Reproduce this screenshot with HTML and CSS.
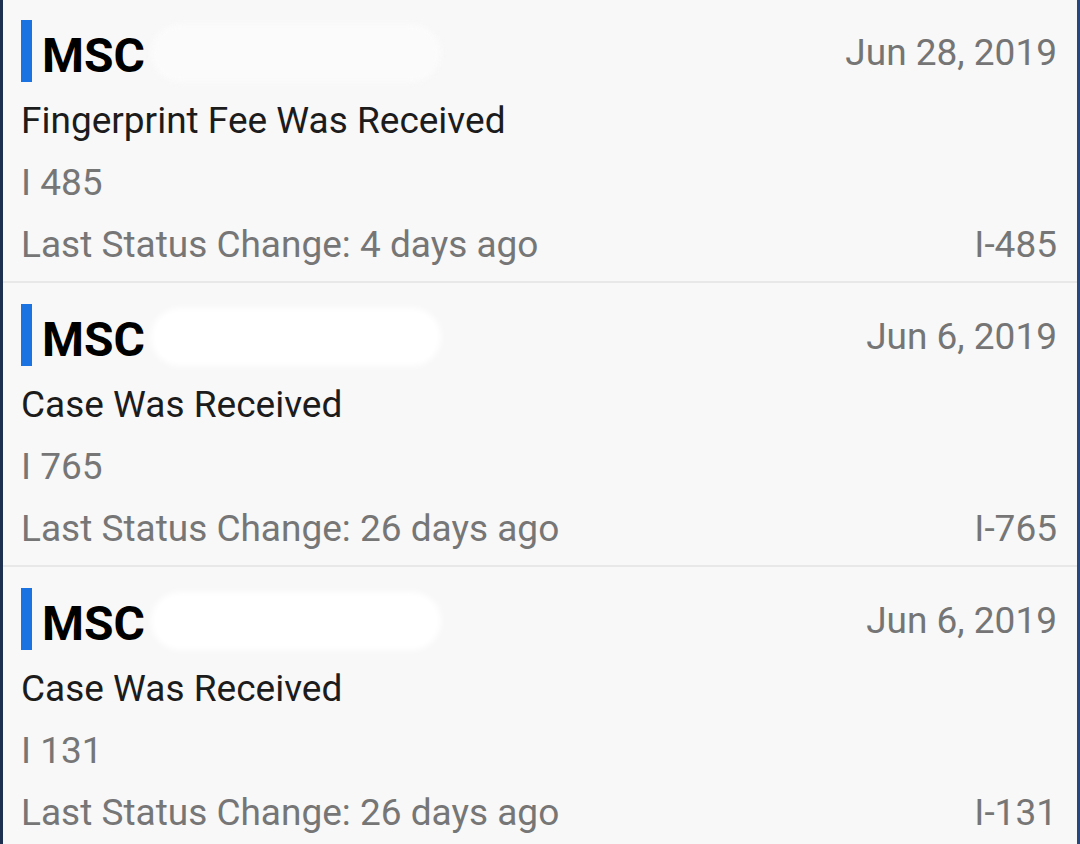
FILE: index.html
```html
<!DOCTYPE html>
<html lang="en">

<head>
    <meta charset="utf-8">
    <meta name="viewport" content="width=device-width, initial-scale=1">
    <title>Case Status</title>

    <!-- CSS for the list layout -->
    <link rel="stylesheet" href="styles.css">
</head>

<body>
    <div class="screen">

        <!-- Case 1 -->
        <div class="case first">
            <div class="case-head">
                <span class="mark"></span>
                <span class="name">MSC</span>
                <span class="redact faint"></span>
                <span class="date">Jun 28, 2019</span>
            </div>
            <div class="line title">Fingerprint Fee Was Received</div>
            <div class="line meta">I 485</div>
            <div class="line meta split">
                <span>Last Status Change: 4 days ago</span>
                <span>I-485</span>
            </div>
        </div>

        <!-- Case 2 -->
        <div class="case">
            <div class="case-head">
                <span class="mark"></span>
                <span class="name">MSC</span>
                <span class="redact"></span>
                <span class="date">Jun 6, 2019</span>
            </div>
            <div class="line title">Case Was Received</div>
            <div class="line meta">I 765</div>
            <div class="line meta split">
                <span>Last Status Change: 26 days ago</span>
                <span>I-765</span>
            </div>
        </div>

        <!-- Case 3 -->
        <div class="case">
            <div class="case-head">
                <span class="mark"></span>
                <span class="name">MSC</span>
                <span class="redact"></span>
                <span class="date">Jun 6, 2019</span>
            </div>
            <div class="line title">Case Was Received</div>
            <div class="line meta">I 131</div>
            <div class="line meta split">
                <span>Last Status Change: 26 days ago</span>
                <span>I-131</span>
            </div>
        </div>

    </div>
</body>

</html>
```

FILE: styles.css
```css
body {
    margin: 0;
    padding: 0;
    background-color: #f8f8f8;
    font-family: Roboto, "Noto Sans", Arial, sans-serif;
    overflow: hidden;
}

.screen {
    height: 844px;
    border-left: 3px solid #1d3050;
    border-right: 3px solid #28477c;
    box-sizing: border-box;
    overflow: hidden;
}

.case {
    padding: 21px 20px 5px 18px;
    border-bottom: 2px solid #e8e8e8;
}

.case.first {
    padding-top: 20px;
}

.case-head {
    display: flex;
    align-items: flex-start;
    height: 62px;
    margin-bottom: 8px;
}

.mark {
    width: 11px;
    height: 62px;
    background-color: #1a73e0;
    margin-right: 10px;
    flex-shrink: 0;
}

.name {
    font-size: 48px;
    font-weight: bold;
    color: #000;
    line-height: 62px;
    padding-top: 5px;
}

/* white smudge hiding the rest of the office name */
.redact {
    width: 290px;
    height: 58px;
    margin-left: 6px;
    margin-top: 4px;
    background-color: #fff;
    border-radius: 29px;
    filter: blur(3px);
}

.redact.faint {
    background-color: #fbfbfb;
}

.date {
    margin-left: auto;
    font-size: 37px;
    color: #757575;
    line-height: 62px;
    padding-top: 2px;
}

.line {
    font-size: 37px;
    line-height: 62px;
}

.title {
    color: #1c1c1c;
}

.meta {
    color: #767676;
}

.split {
    display: flex;
    justify-content: space-between;
}
```
